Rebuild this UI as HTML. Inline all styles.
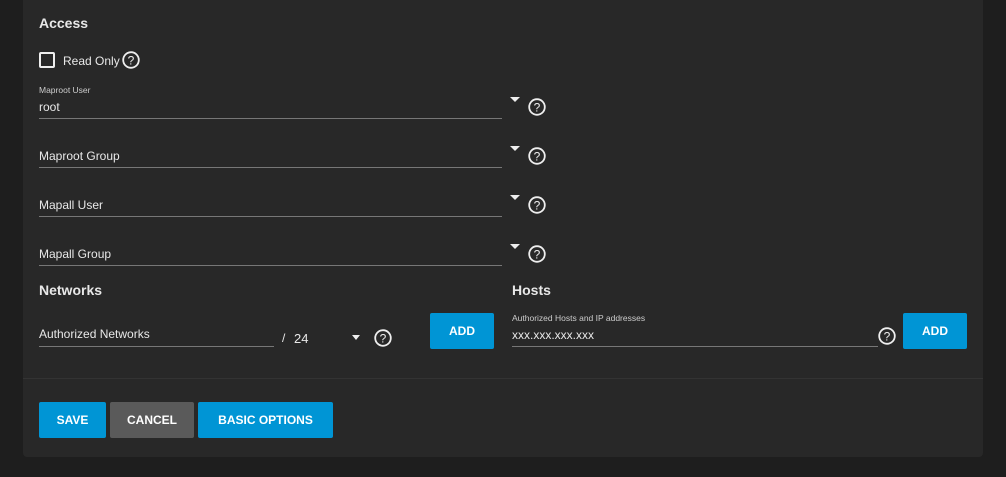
<!DOCTYPE html>
<html><head><meta charset="utf-8"><style>
*{margin:0;padding:0;box-sizing:border-box}
body{width:1006px;height:477px;background:#1e1e1e;font-family:"Liberation Sans",sans-serif;color:#e8e8e8;position:relative;overflow:hidden}
.card{position:absolute;left:23px;top:-10px;width:960px;height:467px;background:#282828;border-radius:4px}
.a{position:absolute;white-space:nowrap}
.h{font-size:14px;font-weight:bold}
.lbl{font-size:12px}
.sm{font-size:8.5px;color:#ccc}
.line{position:absolute;height:1px;background:#777}
.arr{position:absolute;width:0;height:0;border-left:5px solid transparent;border-right:5px solid transparent;border-top:5px solid #eee}
.btn{position:absolute;background:#0095d5;color:#fff;font-size:12px;font-weight:bold;display:flex;align-items:center;justify-content:center;border-radius:2px}
svg{position:absolute}
</style></head><body>
<div class="card"></div>
<div class="a h" style="left:39px;top:15px">Access</div>
<div class="a" style="left:39px;top:52px;width:16px;height:16px;border:2px solid #eee;border-radius:2px"></div>
<div class="a lbl" style="left:63px;top:54px">Read Only</div>
<svg style="left:122px;top:51px" width="18" height="18" viewBox="0 0 18 18"><circle cx="9" cy="9" r="7.8" fill="none" stroke="#eee" stroke-width="1.8"/><text x="9" y="13.3" font-size="12" fill="#eee" text-anchor="middle" font-family="Liberation Sans">?</text></svg>

<div class="a sm" style="left:39px;top:85px">Maproot User</div>
<div class="a lbl" style="left:39px;top:100px">root</div>
<div class="line" style="left:39px;top:118px;width:463px"></div>
<div class="arr" style="left:510px;top:97px"></div>
<svg style="left:528px;top:98px" width="18" height="18" viewBox="0 0 18 18"><circle cx="9" cy="9" r="7.8" fill="none" stroke="#eee" stroke-width="1.8"/><text x="9" y="13.3" font-size="12" fill="#eee" text-anchor="middle" font-family="Liberation Sans">?</text></svg>

<div class="a lbl" style="left:39px;top:149px">Maproot Group</div>
<div class="line" style="left:39px;top:167px;width:463px"></div>
<div class="arr" style="left:510px;top:146px"></div>
<svg style="left:528px;top:147px" width="18" height="18" viewBox="0 0 18 18"><circle cx="9" cy="9" r="7.8" fill="none" stroke="#eee" stroke-width="1.8"/><text x="9" y="13.3" font-size="12" fill="#eee" text-anchor="middle" font-family="Liberation Sans">?</text></svg>

<div class="a lbl" style="left:39px;top:198px">Mapall User</div>
<div class="line" style="left:39px;top:216px;width:463px"></div>
<div class="arr" style="left:510px;top:195px"></div>
<svg style="left:528px;top:196px" width="18" height="18" viewBox="0 0 18 18"><circle cx="9" cy="9" r="7.8" fill="none" stroke="#eee" stroke-width="1.8"/><text x="9" y="13.3" font-size="12" fill="#eee" text-anchor="middle" font-family="Liberation Sans">?</text></svg>

<div class="a lbl" style="left:39px;top:247px">Mapall Group</div>
<div class="line" style="left:39px;top:265px;width:463px"></div>
<div class="arr" style="left:510px;top:244px"></div>
<svg style="left:528px;top:245px" width="18" height="18" viewBox="0 0 18 18"><circle cx="9" cy="9" r="7.8" fill="none" stroke="#eee" stroke-width="1.8"/><text x="9" y="13.3" font-size="12" fill="#eee" text-anchor="middle" font-family="Liberation Sans">?</text></svg>

<div class="a h" style="left:39px;top:282px">Networks</div>
<div class="a h" style="left:512px;top:282px">Hosts</div>

<div class="a lbl" style="left:39px;top:327px">Authorized Networks</div>
<div class="line" style="left:39px;top:346px;width:235px"></div>
<div class="a lbl" style="left:282px;top:331px">/</div>
<div class="a" style="left:294px;top:331px;font-size:13px">24</div>
<div class="arr" style="left:352px;top:335px;border-left-width:4px;border-right-width:4px;border-top-width:5px"></div>
<svg style="left:374px;top:329px" width="18" height="18" viewBox="0 0 18 18"><circle cx="9" cy="9" r="7.8" fill="none" stroke="#eee" stroke-width="1.8"/><text x="9" y="13.3" font-size="12" fill="#eee" text-anchor="middle" font-family="Liberation Sans">?</text></svg>
<div class="btn" style="left:430px;top:313px;width:64px;height:36px">ADD</div>

<div class="a sm" style="left:512px;top:313px">Authorized Hosts and IP addresses</div>
<div class="a lbl" style="left:512px;top:328px">xxx.xxx.xxx.xxx</div>
<div class="line" style="left:512px;top:346px;width:366px"></div>
<svg style="left:878px;top:327px" width="18" height="18" viewBox="0 0 18 18"><circle cx="9" cy="9" r="7.8" fill="none" stroke="#eee" stroke-width="1.8"/><text x="9" y="13.3" font-size="12" fill="#eee" text-anchor="middle" font-family="Liberation Sans">?</text></svg>
<div class="btn" style="left:903px;top:313px;width:64px;height:36px">ADD</div>

<div class="line" style="left:23px;top:378px;width:960px;background:#333"></div>

<div class="btn" style="left:39px;top:402px;width:67px;height:36px">SAVE</div>
<div class="btn" style="left:110px;top:402px;width:84px;height:36px;background:#5a5a5a">CANCEL</div>
<div class="btn" style="left:198px;top:402px;width:135px;height:36px">BASIC OPTIONS</div>
</body></html>
